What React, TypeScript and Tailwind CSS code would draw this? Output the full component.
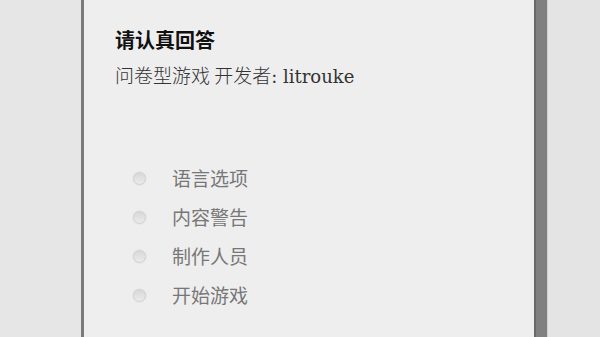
import React from "react";

const items = ["语言选项", "内容警告", "制作人员", "开始游戏"];

export default function App() {
  return (
    <div className="flex h-[337px] w-[600px] overflow-hidden bg-[#e4e4e4]">
      <div className="w-[81px] shrink-0 bg-[#e6e6e6]" />
      <div className="w-[3px] shrink-0 bg-[#7a7a7a]" />
      <div className="flex w-[450px] shrink-0 flex-col bg-[#eeeeee] pl-[31px] pt-[26px]">
        <div className="text-[20px] font-bold leading-[28px] text-[#111111] [font-family:'Noto_Sans_CJK_SC',sans-serif]">
          请认真回答
        </div>
        <div className="mt-[7px] text-[19px] leading-[28px] text-[#333333] [font-family:'DejaVu_Serif','Noto_Sans_CJK_SC',serif]">
          <span className="[font-family:'Noto_Sans_CJK_SC',sans-serif] font-light">问卷型游戏 开发者</span>
          <span className="text-[18px]">: litrouke</span>
        </div>
        <div className="mt-[73px] flex flex-col gap-[11px]">
          {items.map((t) => (
            <div key={t} className="flex h-[28px] items-center">
              <div className="ml-[18px] h-[13px] w-[13px] rounded-full border border-[#d0d0d0] bg-gradient-to-b from-[#d8d8d8] to-[#ebebeb] shadow-[0_0_2px_rgba(0,0,0,0.1)]" />
              <div className="ml-[26px] text-[19px] leading-[28px] text-[#777777] [font-family:'Noto_Sans_CJK_SC',sans-serif]">
                {t}
              </div>
            </div>
          ))}
        </div>
      </div>
      <div className="w-[2px] shrink-0 bg-[#686868]" />
      <div className="w-[11px] shrink-0 bg-[#808080]" />
      <div className="w-[1px] shrink-0 bg-[#cfcfcf]" />
      <div className="flex-1 bg-[#e4e4e4]" />
    </div>
  );
}
